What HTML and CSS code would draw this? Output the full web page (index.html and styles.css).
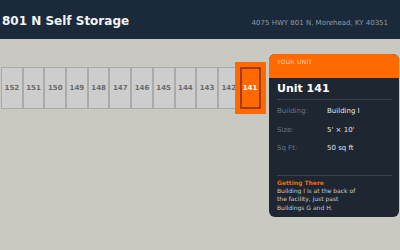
FILE: index.html
```html
<!DOCTYPE html>
<html lang="en">

<head>
  <meta charset="UTF-8">
  <title>801 N Self Storage</title>
  <link rel="stylesheet" href="styles.css">
</head>

<body>
  <header class="topbar">
    <h1 class="topbar__title">801 N Self Storage</h1>
    <span class="topbar__address">4075 HWY 801 N, Morehead, KY 40351</span>
  </header>

  <main class="site">
    <div class="units">
      <div class="unit">152</div>
      <div class="unit">151</div>
      <div class="unit">150</div>
      <div class="unit">149</div>
      <div class="unit">148</div>
      <div class="unit">147</div>
      <div class="unit">146</div>
      <div class="unit">145</div>
      <div class="unit">144</div>
      <div class="unit">143</div>
      <div class="unit">142</div>
      <div class="unit unit--active">141</div>
    </div>

    <aside class="card">
      <div class="card__head">YOUR UNIT</div>
      <div class="card__body">
        <h2 class="card__title">Unit 141</h2>
        <div class="card__rows">
          <div class="card__row"><span class="card__label">Building:</span><span class="card__value">Building I</span></div>
          <div class="card__row"><span class="card__label">Size:</span><span class="card__value">5' × 10'</span></div>
          <div class="card__row"><span class="card__label">Sq Ft:</span><span class="card__value">50 sq ft</span></div>
        </div>
        <div class="card__note">
          <h3>Getting There</h3>
          <p>Building I is at the back of the facility, just past Buildings G and H.</p>
        </div>
      </div>
    </aside>
  </main>
</body>

</html>
```

FILE: styles.css
```css
* {
  margin: 0;
  padding: 0;
  box-sizing: border-box;
  font-family: "DejaVu Sans", Verdana, sans-serif;
}

body {
  background-color: #c9c9c1;
  width: 400px;
  height: 250px;
  overflow: hidden;
}

.topbar {
  display: flex;
  align-items: center;
  justify-content: space-between;
  height: 39px;
  padding: 0 12px 0 2px;
  background-color: #1b2a3a;
}

.topbar__title {
  color: #f2f4f6;
  font-size: 12px;
  font-weight: bold;
  margin-top: 3px;
}

.topbar__address {
  color: #8d9aab;
  font-size: 7px;
  margin-top: 7px;
}

.site {
  display: flex;
  align-items: flex-start;
  padding: 15px 1px 0 1px;
}

.units {
  display: flex;
  margin-top: 13px;
}

.unit {
  flex: 0 0 21.7px;
  height: 42px;
  display: flex;
  align-items: center;
  justify-content: center;
  background-color: #cdcdcd;
  border: 1px solid #aaaaaa;
  color: #6a6a6a;
  font-size: 7px;
  font-weight: bold;
}

.unit--active {
  position: relative;
  z-index: 1;
  flex-basis: 21px;
  background-color: #ff6a00;
  border: 2px solid #a63a00;
  box-shadow: 0 0 0 5px #ff6a00;
  color: #fff;
}

.card {
  width: 130px;
  margin-left: auto;
  border-radius: 6px;
  overflow: hidden;
  background-color: #1d2631;
}

.card__head {
  height: 24px;
  padding: 4px 8px 0 8px;
  background-color: #ff6a00;
  color: #ffd3b4;
  font-size: 6px;
  letter-spacing: 0.3px;
}

.card__body {
  padding: 4px 7px 5px 8px;
}

.card__title {
  color: #fff;
  font-size: 11px;
  font-weight: bold;
  line-height: 14px;
  padding-bottom: 3px;
  border-bottom: 1px solid #374350;
}

.card__rows {
  padding-top: 2px;
  padding-bottom: 17px;
  border-bottom: 1px solid #374350;
}

.card__row {
  display: flex;
  line-height: 18.5px;
  font-size: 7px;
}

.card__label {
  width: 50px;
  color: #6b7785;
}

.card__value {
  color: #e2e6ea;
}

.card__note {
  padding-top: 2px;
}

.card__note h3 {
  color: #f0690c;
  font-size: 6px;
  font-weight: bold;
  line-height: 9px;
}

.card__note p {
  width: 88px;
  color: #c9cfd6;
  font-size: 6px;
  line-height: 8.5px;
}
```
